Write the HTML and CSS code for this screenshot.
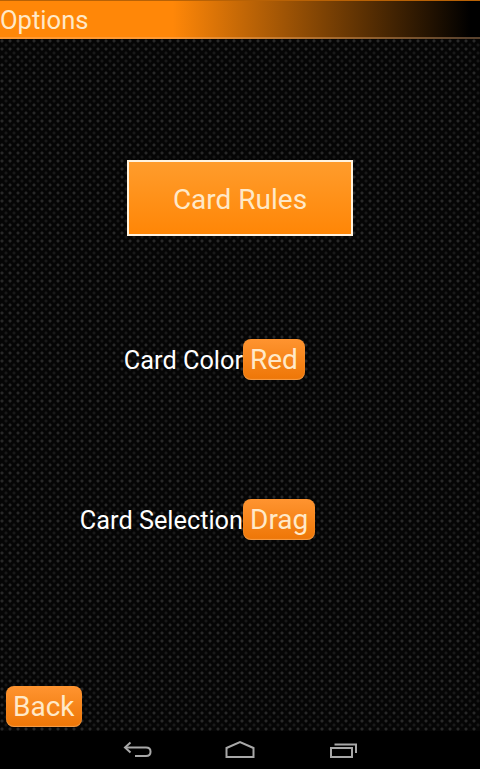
FILE: index.html
```html
<!DOCTYPE html>
<html lang="en">
<head>
<meta charset="utf-8">
<title>Options</title>
<link rel="stylesheet" href="styles.css">
</head>
<body>
<div class="screen">
  <header class="title-bar">Options</header>
  <main class="content">
    <div class="rules-row"><button class="rules-btn">Card Rules</button></div>
    <div class="option-row option-color">
      <span class="option-label">Card Color</span>
      <button class="pill">Red</button>
    </div>
    <div class="option-row option-selection">
      <span class="option-label">Card Selection</span>
      <button class="pill">Drag</button>
    </div>
    <div class="back-row"><button class="pill back">Back</button></div>
  </main>
  <nav class="nav-bar">
    <svg class="nav-icon" width="30" height="20" viewBox="0 0 30 20" fill="none" stroke="#a8a8a8" stroke-width="2">
      <path d="M2 7.500H23Q27.500 7.500 27.500 11.500V12Q27.500 16 23 16H12"/>
      <path d="M7.500 2.500L2 7.500L7.500 12.500"/>
    </svg>
    <svg class="nav-icon" width="30" height="20" viewBox="0 0 30 20" fill="none" stroke="#a8a8a8" stroke-width="2">
      <path d="M1.500 8L15 2L28.500 8V17H1.500Z"/>
    </svg>
    <svg class="nav-icon" width="30" height="20" viewBox="0 0 30 20" fill="none" stroke="#a8a8a8" stroke-width="2">
      <rect x="4" y="8" width="21" height="9"/>
      <path d="M7.500 4.500H29V13"/>
    </svg>
  </nav>
</div>
</body>
</html>
```

FILE: styles.css
```css
* { box-sizing: border-box; }
html, body { margin: 0; padding: 0; }
body { width: 480px; height: 769px; background: #000; font-family: Roboto, "Liberation Sans", sans-serif; overflow: hidden; }
.screen { display: flex; flex-direction: column; width: 480px; height: 769px; }
.title-bar {
  height: 39px;
  line-height: 39px;
  font-size: 25.600px;
  color: #ffe9c8;
  background: linear-gradient(to right, #ff8708 0%, #ff8708 36%, #000 98%);
  border-top: 1px solid #b86206;
  box-shadow: inset 0 -2px 0 rgba(255, 190, 130, 0.35);
}
.content {
  flex: 1;
  display: flex;
  flex-direction: column;
  background-color: #050505;
  background-image:
    radial-gradient(circle at 2px 2px, #282828 0, #282828 1px, transparent 2px),
    radial-gradient(circle at 6px 6px, #191919 0, #191919 1px, transparent 2px);
  background-size: 8px 8px;
}
.rules-row { display: flex; justify-content: center; padding: 121px 0 0; }
.rules-btn {
  width: 226px;
  height: 76px;
  border: 2px solid #fff3df;
  background: linear-gradient(#ff9c2c, #ff8606);
  color: #ffe9c8;
  font: 28px Roboto, sans-serif;
  padding: 3px 0 0;
}
.option-row { display: grid; grid-template-columns: 243px auto; justify-content: start; align-items: center; }
.option-color { margin-top: 103px; }
.option-selection { margin-top: 119px; }
.option-label { text-align: right; color: #fff; font-size: 25.300px; padding-top: 2px; }
.pill {
  height: 41px;
  padding: 0 7px;
  border: 0;
  border-radius: 8px;
  background: linear-gradient(#ff9430, #ee7606);
  box-shadow: inset 0 -1px 1px rgba(255, 200, 140, 0.5);
  color: #ffe9c8;
  font: 28px Roboto, sans-serif;
  justify-self: start;
}
.back-row { margin-top: auto; padding: 0 0 4px 6px; }
.nav-bar { height: 38px; display: flex; justify-content: center; align-items: center; gap: 72px; background: #000; }
```
